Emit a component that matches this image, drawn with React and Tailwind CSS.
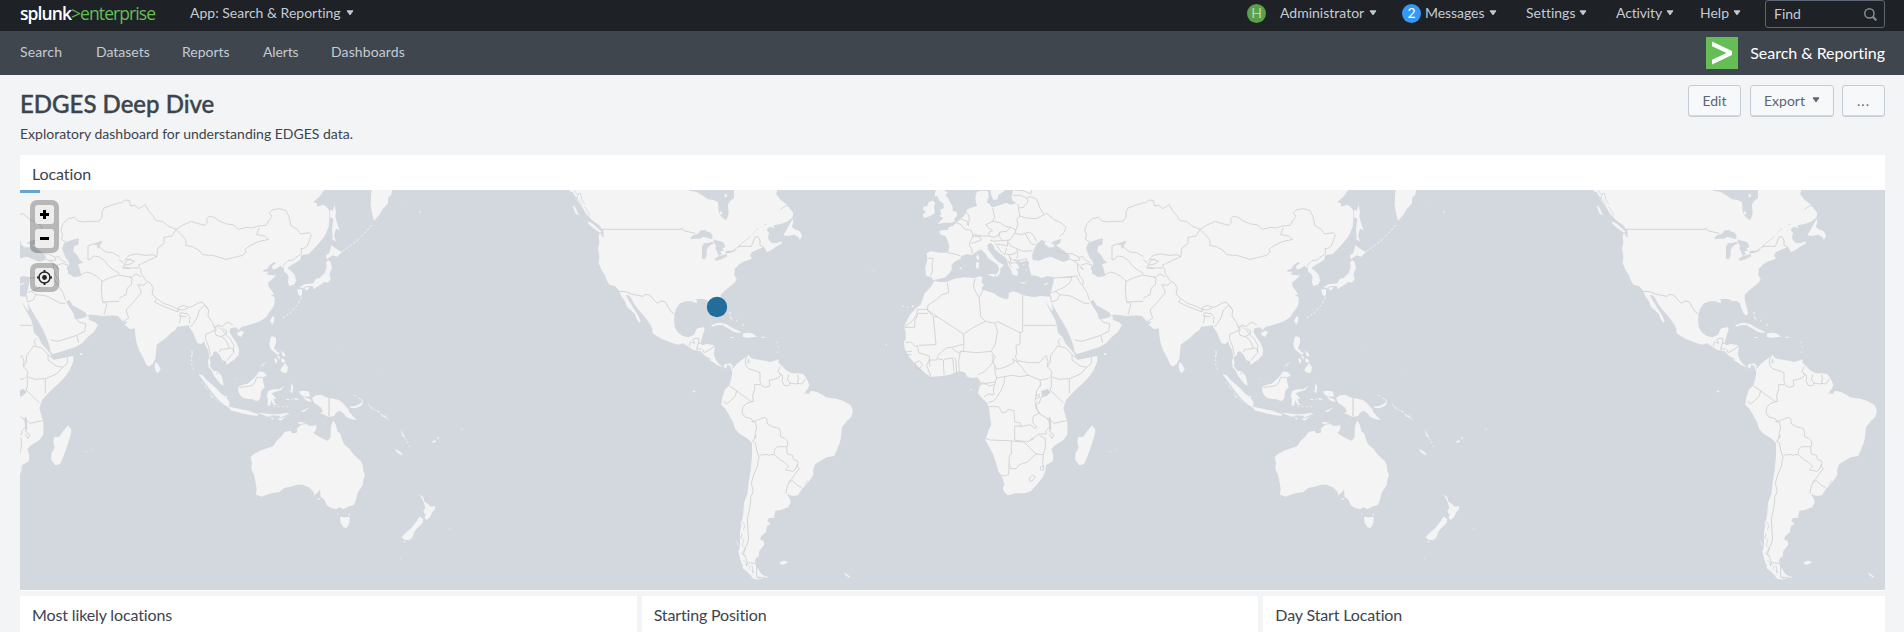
const LAND = '#f4f4f4';
const SEA = '#d3d8df';

function Caret({ className = '' }) {
  return (
    <svg viewBox="0 0 8 6" className={`h-[6px] w-[8px] shrink-0 ${className}`}>
      <path d="M1 0.8H7L4 4.9Z" fill="currentColor" stroke="currentColor" strokeWidth="0.9" strokeLinejoin="round" />
    </svg>
  );
}

/* Canada, the United States, Central America and the Caribbean */
function NorthAmerica() {
  return (
    <g transform="translate(540 180) scale(0.333333)">
      <path
        fill={LAND}
        d="M84 20L88 34L98 36L106 52L116 68L128 84L136 98L148 112L160 124L178 136L190 152L191 170L186 172L184 160L176 164L178 188L174 206L178 226L176 250L186 272L194 284L200 300L208 314L224 318L236 330L244 348L254 362L262 382L274 392L284 402L290 416L298 428L302 424L294 406L284 390L274 374L264 358L257 346L266 346L272 352L284 374L298 392L314 410L330 432L337 446L338 460L360 474L388 486L414 494L430 490L446 500L460 510L482 514L496 528L508 540L522 548L532 556L548 560L558 566L562 554L574 558L576 566L580 558L570 550L558 552L546 558L534 550L526 536L522 524L524 500L518 494L500 492L486 496L482 488L488 466L494 448L490 441L470 446L462 464L446 472L428 468L412 456L404 440L402 420L404 402L408 386L420 370L438 364L456 364L470 370L472 362L466 358L480 356L494 358L506 364L516 362L528 370L532 384L538 398L546 407L552 402L550 388L546 374L542 360L542 344L556 330L572 318L584 308L590 296L582 284L588 270L594 256L608 246L618 242L636 236L630 226L636 216L650 210L664 204L672 200L676 208L680 216L694 210L708 200L724 192L726 184L712 188L696 190L686 180L684 168L688 160L680 150L688 140L704 144L700 136L684 132L664 138L648 152L632 166L652 146L676 132L700 136L722 132L744 124L758 112L760 98L748 84L736 70L722 60L708 42L712 34L706 20L582 20L582 54L568 66L564 74L566 100L560 120L552 118L540 104L536 92L534 66L520 60L504 58L486 46L470 36L448 32L446 20Z"
      />
      <path fill={LAND} d="M758 116L748 134L738 152L730 166L744 168L762 164L774 170L780 180L786 168L780 154L764 148L756 140L760 126ZM142 124L156 130L172 144L186 156L180 158L162 146L146 132ZM98 76L108 84L112 96L118 106L108 102L102 90ZM554 42L562 44L560 52L554 50ZM540 94L546 96L546 104L540 102Z" />
      <path fill={LAND} d="M514 436L528 430L542 428L558 432L574 442L590 450L604 456L598 459L582 456L566 446L548 436L532 436L516 440ZM610 460L622 458L636 460L652 470L636 472L624 474L608 470ZM568 471L584 472L576 475ZM664 470L676 470L675 473L664 473ZM566 396L574 398L570 402ZM568 408L574 412L578 420L572 416ZM588 418L592 424L588 424ZM606 430L612 436L608 438ZM710 482L714 488L711 489ZM714 498L717 504L714 505ZM712 512L716 518L713 519ZM710 538L718 540L714 545L710 544ZM458 631L466 633L466 637L459 637ZM992 271L1002 272L1001 274Z" />
      <path fill={SEA} d="M450 178L458 166L474 162L480 152L494 149L500 154L512 158L518 168L516 178L502 174L490 170L480 176L466 176ZM486 200L492 190L508 188L522 184L534 182L550 186L556 200L546 206L552 212L540 214L546 222L536 228L532 218L526 204L516 192L506 200L500 210L500 228L494 238L486 236ZM524 238L532 230L546 226L562 222L560 230L544 238L528 243ZM554 220L560 212L576 212L592 202L584 214L568 220ZM584 264L592 260L590 278L584 282ZM712 158L724 160L736 150L744 138L734 156L728 172L722 180L708 176L700 164L696 178L688 172L690 156Z" />
      <path fill={LAND} d="M520 186L528 196L524 210L516 200Z" />
      <path fill="none" stroke={SEA} strokeWidth="2.5" d="M102 30L112 44L122 40L126 60L134 72M96 44L112 54L124 74L122 86M116 40L108 62L118 70M134 80L144 96L150 106M590 204L632 168M176 160L190 158" />
      <path fill="none" stroke="#cbcbcb" strokeWidth="2.4" strokeLinejoin="round" d="M186 148H424L426 144L432 152L448 156L466 160M520 180L534 184M592 202L600 199H634L642 180L646 170L654 170L660 180V196L670 200M238 334L256 335L274 342L308 349L318 343L330 346L342 360L352 370L364 362L376 366L386 384L394 396L404 402M448 498L450 486L464 490L458 478L466 475H476V490H482M474 490L470 508L484 506M486 508L494 518L510 508L522 500M500 532L512 538M546 554L552 562M722 88L740 76" />
    </g>
  );
}

function SouthAmerica() {
  return (
    <g transform="translate(690 340) scale(0.333333)">
      <path
        fill={LAND}
        d="M118 74L128 88L140 72L158 58L172 48L178 46L182 54L196 58L210 60L226 62L240 66L252 62L264 60L266 68L278 80L290 92L306 100L322 100L340 102L350 116L358 134L354 146L344 160L356 162L364 152L380 156L400 166L408 172L440 176L462 184L482 196L489 212L484 230L468 246L456 262L453 290L450 306L440 332L432 348L410 352L392 362L376 372L370 386L370 404L360 420L346 436L332 452L324 466L308 468L290 462L300 476L302 488L294 502L272 510L256 512L254 524L250 534L236 534L232 544L240 548L230 560L228 576L214 588L210 598L222 604L222 616L208 632L206 648L196 658L196 674L206 690L216 704L236 712L214 716L196 712L178 702L164 688L154 668L146 640L150 608L150 580L154 552L160 520L162 490L172 462L176 430L182 390L186 350L186 308L170 294L150 282L136 268L130 248L118 226L106 206L94 194L96 176L104 150L118 136L124 116L127 96Z"
      />
      <path fill={LAND} d="M140 600L144 612L142 618ZM144 630L152 642L148 646ZM152 656L164 664L158 670ZM156 678L168 682L172 694L160 688ZM180 704L200 712L210 720L190 716ZM268 668L278 662L292 664L290 670L276 675ZM462 698L470 702L480 710L478 713L466 705ZM232 548L242 552L236 556ZM152 540L156 546L154 560Z" />
      <path fill={SEA} d="M174 54L178 60L178 70L172 68ZM192 284L200 292L194 296ZM154 580L158 584L152 600ZM166 668L174 672L168 680ZM184 690L190 692L188 700Z" />
      <path fill="none" stroke={SEA} strokeWidth="2.5" d="M150 590L162 600L156 616L166 626L154 640L168 648M160 660L180 680L176 690M186 676L190 700M156 545L166 556L160 570M346 432L352 422M344 162L352 150L364 150" />
      <path
        fill="none"
        stroke="#cdcdcd"
        strokeWidth="2.4"
        strokeLinejoin="round"
        d="M170 48L166 62L168 78L176 86L190 90L210 98L210 124L214 136L226 142L240 138L238 120L250 118L264 114L272 106L264 94L270 80M268 98L278 108L276 122L282 136L294 138L300 130L292 118L296 104M300 130L322 132L326 116L322 104M322 130L336 132L346 116M210 134L194 134V148L188 166L190 184L180 184L170 174L154 164L140 152L118 138M140 152L136 168L124 180L110 192L100 184M190 184L170 190L158 202L156 218L166 232L184 236L188 244L196 242L224 232L230 236L232 252L248 260L268 266L272 280L272 290L286 296L294 306L292 320M184 244L196 246L200 262L196 280L198 290L190 300L188 306M190 304L196 308L200 330L206 350L214 344H234L236 348L240 344H252M252 344L254 328L264 320L290 320L292 342L308 346L310 358L324 364L322 380L328 386L322 392L310 410L300 422L296 432M252 344L272 360L288 370L296 380L286 390L308 394L316 388L322 374M296 424L308 422L320 434L334 442L338 446M296 428L290 446L288 460M206 352L202 380L192 402L184 430L190 456L182 470L182 486L178 512L172 536L174 570L176 600L168 620L160 642L168 654L172 668L196 670M200 676V712L226 712"
      />
    </g>
  );
}

/* Europe, the Middle East and Africa */
function EuropeAfrica() {
  return (
    <g transform="translate(880 180) scale(0.333333)">
      <path
        fill={LAND}
        d="M400 20L398 38L394 50L398 62L410 70L392 74L378 68L352 78L336 82L326 70L318 66L326 52L324 34L306 32L290 36L286 52L288 68L292 78L278 82L262 88L258 98L248 112L240 120L228 128L218 138L206 142L204 150L188 150L178 154L182 164L196 168L204 184L208 200L204 218L180 218L152 214L140 220L142 240L136 262L138 288L152 290L160 300L172 298L196 292L208 280L216 268L214 256L226 244L242 236L244 228L262 222L276 226L288 216L302 208L316 220L324 234L338 244L352 254L358 268L352 280L344 288L352 290L362 276L360 266L372 256L356 246L344 234L334 222L324 208L322 194L332 188L340 196L344 208L358 220L374 230L382 242L384 256L392 268L398 284L412 288L414 276L408 266L420 264L412 252L404 248L412 242L424 246L438 242L448 246L446 258L450 272L454 286L470 288L486 294L502 288L522 292L520 308L516 324L512 344L510 362L518 376L528 392L538 410L548 426L560 448L572 474L580 496L584 516L592 522L630 510L660 500L680 488L696 470L714 456L726 434L716 426L700 420L696 404L688 412L672 416L656 416L652 400L640 382L630 364L640 360L650 376L672 388L692 400L702 394L712 404L790 406V20Z"
      />
      <path
        fill={LAND}
        d="M164 302L176 306L200 306L224 296L252 292L282 294L302 288L308 294L304 306L312 314L304 326L318 332L342 340L356 350L378 358L386 354L386 340L400 334L414 338L430 346L462 352L480 348L510 350L512 364L518 384L520 392L512 388L496 362L506 384L516 402L526 420L530 436L534 458L548 472L556 490L572 508L586 524L584 532L594 540L620 534L652 527L652 544L640 572L624 594L604 614L580 636L558 660L550 684L556 706L562 726L562 764L550 780L522 798L514 808L520 826L518 844L498 856L496 874L488 892L470 914L452 934L434 940L406 940L384 946L374 938L368 924L374 914L366 890L356 876L348 848L340 824L328 802L316 780L324 756L334 732L330 710L328 690L322 670L308 656L294 640L298 622L300 604L292 592L276 594L262 590L256 578L242 574L226 576L210 584L186 588L152 590L138 582L122 566L104 550L90 534L80 520L74 504L72 488L78 474L76 452L72 440L80 424L90 404L106 386L122 374L128 358L134 340L152 322Z"
      />
      <path fill={LAND} d="M176 20L166 34L164 50L172 48L178 62L190 70L192 84L180 90L184 102L178 108L190 114L182 122L172 132L192 128L212 128L226 124L222 118L232 106L230 96L218 92L218 80L210 66L204 54L196 46L204 36L194 34L196 20ZM146 66L158 62L166 68L162 80L164 100L150 108L132 114L128 104L138 96L130 90L130 80L142 78ZM324 60L316 52L306 62L316 70ZM330 20L334 46L340 60L352 58L356 44L372 34L376 20ZM288 230L294 222L298 236L294 242ZM288 246L298 248L296 266L288 264ZM322 282L346 282L342 292ZM236 264L246 262L244 268ZM418 306L442 308L430 311ZM490 314L506 306L500 314ZM622 752L636 736L646 748L644 764L634 796L622 830L612 852L598 856L586 840L586 820L596 804L592 786L594 772L610 770ZM672 520L682 522L674 526ZM64 376L72 378L68 382ZM80 380L87 382L82 385ZM94 379L103 375L98 383ZM688 812L694 814L690 817ZM706 806L710 808L706 811ZM16 494L22 492L18 498ZM272 626L276 630L270 630ZM254 256L258 258L254 260Z" />
      <path
        fill={SEA}
        d="M458 240L456 226L462 208L470 192L484 180L496 184L494 192L506 202L520 202L524 194L512 190L524 182L544 176L540 190L528 196L546 208L568 226L570 238L552 246L530 238L514 230L496 234L478 242ZM618 206L624 190L640 182L668 174L668 192L654 200L652 214L664 226L672 240L682 248L666 252L672 270L676 288L654 292L636 280L636 264L640 248L628 232ZM732 184L740 182L732 196L726 208L722 194L712 196L720 188ZM484 634L502 626L512 636L500 648L486 652ZM464 660L470 672L474 690L482 700L476 702L466 684ZM506 710L512 714L514 748L508 752L508 730ZM462 770L448 780L456 780ZM480 612L484 618L476 622ZM416 250L424 246L428 262L440 258L444 272L448 288L436 290L424 282L418 272Z"
      />
      <path fill={LAND} d="M396 246L412 254L416 268L406 264ZM428 252L434 254L430 257ZM436 268L442 270L438 272Z" />
      <path
        fill="none"
        stroke="#cdcdcd"
        strokeWidth="2.4"
        strokeLinejoin="round"
        d="M204 218L224 222L242 228M142 234L160 236L156 252L158 272L152 286M228 128L244 134L252 146L274 152L280 166L272 182L268 196L276 208L276 222M244 118L262 124L266 138M258 98L266 104L268 120L262 136M276 168L300 170L304 180L288 186L274 190M282 164L310 168L326 168L328 156L338 152L326 144L318 134L338 124L344 112L338 84M338 124L360 128L374 138L392 142M326 168L340 172L356 166L360 156L380 154L392 142L408 150L414 132L410 118L420 108L416 88L414 72M360 156L356 168L368 182L390 180L404 160L408 150M330 180L342 184L356 182L368 182M344 192L362 194L382 198L384 180M350 196L364 216L374 224L380 204M384 186L392 198L410 206L412 214L402 222L390 224L378 222M404 160L424 164L436 160L444 176L456 194L466 192M410 206L430 214L458 212M414 214L412 232L402 242L392 236L386 224M402 242L426 240L440 236L440 246M436 160L450 156L462 168L470 184M390 232L392 250L404 248M384 242L394 262M418 108L440 114L470 116L492 104L480 84L470 58L452 50L440 54L444 66L430 82L416 84M398 46L420 46L440 54M402 30L430 32L452 42L456 28M492 104L500 100L524 120L546 130L558 142L552 158L538 170M524 212L556 220L578 222L598 232L608 230L616 240L632 248M570 238L582 242L592 250L610 268L602 264M582 242L600 240L596 232M592 250L594 272L600 290L610 300L608 318L622 340L628 360M522 294L550 292L590 288M550 292L576 292L570 308L552 322L526 334L516 338M526 334L540 344L572 348L614 370H628M540 344L532 360L514 366L512 348M590 288L598 304L604 314M584 480L606 484L632 476L662 466L686 454L690 432L668 426L662 416M662 466L668 488M540 496L534 484L542 474M634 270L636 256L620 250L602 256M614 150L622 130L636 116L656 112L664 122L680 126L700 124L728 124L738 112L738 96L744 84L790 68M614 150L620 164L616 178L630 186M696 240V198L716 190M696 240L706 236L712 228L728 230L748 244L756 256L770 268L790 280M676 284L690 276L706 280L724 290L738 304L736 330L740 366L752 370L750 384L744 404M740 366L790 364M728 200L750 216L770 218L790 230M738 304L760 294L790 284"
      />
      <path
        fill="none"
        stroke="#cdcdcd"
        strokeWidth="2.4"
        strokeLinejoin="round"
        d="M202 308L206 338L186 344L170 358L144 376L142 390L250 462L278 444L316 424L302 410L298 352L292 344L284 330L280 316L286 296M144 388H112L110 404L96 424L72 442M74 442H104L104 424L114 400H144M116 496L168 494L160 410H172M142 390L160 410M298 352L306 336L310 326M316 424L346 430L352 424L420 458L428 454V346M430 436H530M420 458L420 492L408 496L410 520L406 530L414 548L398 536L402 548L374 562L350 568L344 556L336 542L346 532L334 514L346 492L352 456L346 430M250 462L252 492L216 502L198 504L174 526L170 540L148 540M252 492L250 514L286 518L314 516L334 514M216 502L224 512L240 520L236 544L238 574M174 536L190 540L192 584M192 538L218 534L222 574M224 532L228 544L230 576M78 488L92 486L106 500L112 496L116 518L148 528L148 540L140 556L152 588M76 516L96 514M76 524L94 524M106 548L118 542L128 554L118 566L106 564ZM148 540L150 560M242 520L240 514L250 514M336 524L342 542L328 560L314 574L294 584M344 556L346 582L350 594L346 606L318 610L298 608M318 612H300V620M346 606L340 628L342 644L326 642L312 650M318 612L328 618L342 614M350 594L374 590L372 610L364 630L352 650L342 662L326 668M374 590L396 586L420 590L446 586L480 600L504 596L514 586M414 548L446 588M414 542L444 548L478 548L498 526L504 544L502 560L516 574L514 586M502 560L510 548L512 526L526 508L532 498L558 504L576 524L584 530M576 524V540L600 558L620 562M620 562L634 550V532M620 562L602 582L568 596M514 590L536 598L568 596V640M514 592L514 620L510 630L550 668M510 636H486M480 600L482 616L470 632L468 650L464 662M466 646L478 644V652L468 656M470 664L476 672L486 648M324 680H356L366 698L378 696L384 688L402 692L404 726L420 728L424 740L450 734L466 746L470 740L458 728L460 708L476 700L500 714L508 726L510 740L498 752V762L476 762L460 776L448 784L430 784L404 780V738H424M318 776L330 780L384 782L430 786M394 784V822L388 826L386 884L372 888L362 884M430 784L448 802L468 822L490 824L496 802L496 776L478 766M468 822L442 846L418 854L408 866L392 866L388 850M490 824L488 850L492 862M480 862L488 858L492 868L484 872ZM448 894L458 886L466 890L458 902L450 904ZM502 714L522 730L560 722M510 740L510 756L522 764L516 776L508 762"
      />
    </g>
  );
}

/* Asia east of the Caspian, Japan and the Malay archipelago */
function Asia() {
  return (
    <g transform="translate(1080 180) scale(0.333333)">
      <path
        fill={LAND}
        d="M90 20H810L802 34L790 50L772 66L782 70L784 80L800 74L812 80L820 92L820 118L818 140L806 168L790 188L772 208L758 222L744 224L736 226L732 240L718 248L706 256L694 264L706 274L716 284L720 300L716 312L700 318L696 306L698 292L692 280L684 276V264L672 258L660 266L650 268L648 258L660 250L654 246L640 256L634 266L620 270L624 276L636 274L634 284L650 286L660 286L650 296L636 308L638 320L648 332L654 344L644 344L656 352L656 368L650 384L638 400L630 412L612 424L596 430L576 436L558 440L548 450L540 442L524 444L520 456L530 472L542 490L549 508L548 524L536 538L520 548L512 556L510 544L498 540L492 526L480 514L472 516L470 526L460 532L464 548L462 558L472 572L484 574L496 586L500 600L503 616L496 614L484 600L474 588L468 574L458 562L456 544L460 528L456 510L448 496L444 484L436 492L424 490L418 474L412 460L402 444L398 436L384 438L364 440L358 450L344 460L334 470L316 484L302 494L300 516L298 536L290 552L278 560L270 552L262 534L250 512L242 490L238 466L236 444L222 448L206 434L214 426L200 424L186 408L170 406L140 408L110 404L90 404Z"
      />
      <path fill={LAND} d="M298 546L306 552L314 568L308 578L300 576L296 560ZM544 458L556 452L564 456L556 470L544 466ZM650 408L656 414L650 434L642 424ZM836 76L840 96L838 112L850 150L840 146L834 168L840 184L830 180L828 150L832 116L822 112L822 90L830 92ZM826 196L840 206L858 216L844 230L830 226L820 232L812 238L810 226L820 220ZM816 240L824 246L828 264L820 282L824 298L816 308L804 306L794 314L782 320L774 328L770 318L754 318L740 324L730 322L748 312L772 310L780 296L790 294L806 280L812 262L810 248ZM724 328L738 328L738 344L732 350L726 340ZM746 324L760 320L758 328L748 330ZM946 36L952 20L1010 20L1006 44L996 54L996 70L980 88L970 104L954 122L948 100L944 72ZM932 152L938 148L944 142ZM1030 60L1044 66L1038 64ZM1090 94L1096 98L1090 99ZM714 318L716 320L712 321Z" />
      <path fill="none" stroke={LAND} strokeWidth="3" strokeDasharray="7 6" d="M860 214L910 176M916 170L950 132M736 352L726 372L704 398L680 414" />
      <path fill={LAND} d="M644 472L650 468L660 474L660 488L654 504L664 516L672 520L664 524L650 512L644 508L640 492ZM662 526L672 530L670 540ZM676 512L686 520L688 530L680 528ZM676 534L688 540L686 548L676 546ZM656 532L664 540L662 552L656 546ZM674 566L688 550L696 562L692 580L682 578L674 574ZM638 532L630 544L612 560L622 556ZM546 620L560 614L574 612L590 598L602 586L610 574L622 576L632 586L620 594L622 610L626 622L616 632L612 656L604 664L590 658L572 656L558 652L548 638ZM428 582L440 586L452 600L466 612L480 624L494 640L510 652L520 666L520 682L506 676L490 662L474 644L460 626L444 604L434 592ZM518 682L536 684L552 690L570 690L592 698L606 702L604 708L580 704L556 700L530 692ZM636 634L650 628L670 628L684 618L676 630L656 636L646 640L656 650L662 656L652 656L658 672L666 676L652 674L646 660L642 678L634 676L636 658L632 648ZM706 610L712 620L708 642L704 630ZM730 636L744 632L760 636L758 648L744 650L734 644ZM690 656L702 660L692 660ZM712 654L732 658L720 660ZM612 700L640 704L650 708L634 710ZM676 700L690 704L670 714ZM658 702L680 702L690 698L700 700L680 706ZM72 520L78 521L72 524ZM408 512L410 520L406 540ZM508 646L516 650L510 652ZM446 618L452 626L448 624ZM460 642L474 656L464 650ZM538 594L542 597L538 598Z" />
      <path fill="none" stroke={LAND} strokeWidth="2.5" strokeDasharray="5 8" d="M408 512L406 550L416 574M438 606L470 648L490 668M652 680H700" />
      <path
        fill="none"
        stroke="#cdcdcd"
        strokeWidth="2.4"
        strokeLinejoin="round"
        d="M136 82L176 72L196 68L208 60L220 62L224 78L236 76L248 86L268 74L276 90L290 106L300 122L320 124L336 138L360 148L384 134L406 124L424 130L446 136L454 128L452 118L460 108L474 112L488 122L512 132L530 134L548 148L570 142L590 144L606 138L630 136L640 120L648 110L640 98L648 90L670 86L690 92L700 112L704 136L724 148L734 162L760 158L766 166L754 198L742 206L736 204L736 222L720 232L712 240L696 242L680 258M360 148L376 164L390 180V196L410 200L430 212L440 224L470 226L490 232L510 238L536 232L560 226L570 216L568 208L580 198L604 186L638 178L626 168L602 164L610 142M360 148L348 168L324 172V190L306 204L302 230L290 224L270 226L240 222L220 226L206 240L220 238L236 244L224 252L204 256L212 244L224 236M128 198L140 210L160 218L178 220L186 236L204 250M302 230L280 240L260 250L246 256L254 268L256 280L270 302L282 308L292 324L288 342L300 354L322 370L346 378L366 388L384 390L398 382L408 380L424 370L438 366L448 376L458 390L456 408L470 428L478 444L486 434L498 440L514 426L530 434M204 262L220 264L246 264M204 256L200 264L222 266M184 284L202 288L226 292L240 282L256 290M100 234L108 228L124 232L140 240L152 256L168 262L190 282M134 300L152 300L168 286L190 286M138 308L134 340L138 366L180 364L190 354L210 344L214 324L226 314L228 298L222 288M138 366L152 374L154 388L144 404M272 308L262 316L246 314L252 326L256 338L236 362L216 384L210 390L218 414L204 424M300 358L296 366L320 378L346 388L366 396L368 382L382 376L398 382M370 400L374 412L370 430M372 398L396 402L402 412L400 430M370 408L392 410M458 390L446 376L430 390L424 412L412 430L404 440M470 436L482 448L466 456L450 462L448 476L458 500L462 524M476 446L480 466L496 470L510 480L520 504L530 506L534 516L524 528L512 542M496 470L510 462L512 452L500 446M490 516L494 508L520 506M480 578L486 582M550 622L572 620L590 616L598 604L602 592L620 592M484 438L500 452L512 466L524 478L534 498L532 516"
      />
    </g>
  );
}

/* New Guinea, Australia, New Zealand and the nearby islands */
function Oceania() {
  return (
    <g transform="translate(1180 340) scale(0.333333)">
      <path
        fill={LAND}
        d="M532 242L540 256L544 274L554 282L558 300L566 314L580 326L592 342L604 354L614 362L620 374L622 392L627 404L622 420L620 436L606 456L600 478L594 494L576 500L562 508L550 502L540 508L526 504L512 496L506 480L494 470L492 448L484 462L476 466L470 452L458 442L440 434L424 434L402 440L384 444L370 456L346 460L332 464L318 470L300 464L302 446L298 424L294 404L286 386L288 370L284 352L294 342L312 332L336 324L352 318L362 302L374 292L386 276L404 272L408 280L422 278L424 264L436 254L450 252L462 258L482 256L480 270L472 280L486 288L504 298L516 302L524 290L524 268L528 250Z"
      />
      <path fill={LAND} d="M552 530L566 532L581 530L580 548L572 564L562 562L554 548ZM544 518L548 524L544 524ZM578 520L582 524L578 528ZM484 474L494 476L486 480ZM792 464L802 472L806 486L816 492L824 500L838 498L836 508L828 518L822 532L812 540L806 534L808 524L802 514L808 504L804 490ZM790 530L802 536L800 548L788 560L776 574L768 594L758 601L742 598L738 590L750 578L766 564L780 546ZM744 602L750 604L746 608ZM468 174L480 166L496 164L510 172L532 176L548 180L560 188L568 198L576 206L580 216L592 230L604 240L588 238L572 232L562 220L550 212L540 218L534 228L516 230L500 222L492 220L500 216L496 204L486 196L474 188ZM428 154L442 152L458 156L462 168L452 170L446 162ZM440 170L462 178L468 186L452 182ZM580 200L598 198L610 192L622 184L618 196L600 204L584 204ZM604 172L616 178L624 186ZM716 326L730 334L742 344L734 344L722 336ZM736 276L744 284L746 294L740 290ZM748 296L750 302ZM828 304L838 300L840 306L830 308ZM842 294L852 290L846 298ZM914 264L924 270L916 268ZM424 248L436 246L450 250L430 252ZM878 566L884 566L882 569ZM732 652L735 655L732 656ZM636 194L650 206L656 212L644 204ZM660 210L674 216L668 216ZM674 222L688 230L680 230ZM686 222L694 236L688 232ZM304 218L344 222L380 224L404 222L380 228L320 224ZM364 238L388 230L400 222L374 242ZM344 232L356 236L348 238ZM216 200L250 206L270 212L292 218L288 222L250 216L226 212ZM434 214L460 202L444 216Z" />
      <path fill={SEA} d="M478 464L490 452L486 474ZM806 476L810 484L804 480Z" />
      <path d="M519 174V228" stroke="#dedede" strokeWidth="5" fill="none" />
      <path fill="none" stroke={LAND} strokeWidth="2.5" strokeDasharray="5 7" d="M636 192L700 242M736 274L762 320M394 178L430 180M596 166L622 184M400 152L410 158L406 134" />
      <path fill={LAND} d="M550 34L553 36L550 37ZM668 91L670 93L667 94Z" />
    </g>
  );
}

function WorldMap() {
  return (
    <svg viewBox="20 190 1865 400" className="block h-[400px] w-full" preserveAspectRatio="none">
      <defs>
        <g id="world">
          <SouthAmerica />
          <NorthAmerica />
          <Asia />
          <EuropeAfrica />
          <Oceania />
        </g>
      </defs>
      <rect x="20" y="190" width="1865" height="400" fill={SEA} />
      <use href="#world" x="-1024" />
      <use href="#world" />
      <use href="#world" x="1024" />
      <circle cx="717" cy="307" r="10.2" fill="#236d9c" />
    </svg>
  );
}

function MapButton({ children }) {
  return (
    <button className="flex h-[19px] w-[19px] items-center justify-center rounded-[3px] bg-[#f4f4f4]/90">
      {children}
    </button>
  );
}

function MapControls() {
  return (
    <div className="absolute left-[10px] top-[10px] flex flex-col gap-[10px]">
      <div className="flex flex-col gap-[5px] rounded-[7px] bg-black/25 p-[5px]">
        <MapButton>
          <svg viewBox="0 0 9 9" className="h-[9px] w-[9px]">
            <path d="M3 0H6V3H9V6H6V9H3V6H0V3H3Z" fill="#000" />
          </svg>
        </MapButton>
        <MapButton>
          <svg viewBox="0 0 9 3" className="h-[3px] w-[9px]">
            <path d="M0 0H9V3H0Z" fill="#000" />
          </svg>
        </MapButton>
      </div>
      <div className="rounded-[7px] bg-black/25 p-[5px]">
        <MapButton>
          <svg viewBox="0 0 15 15" className="h-[15px] w-[15px]">
            <circle cx="7.5" cy="7.5" r="5.5" fill="none" stroke="#222" strokeWidth="1.4" />
            <circle cx="7.5" cy="7.5" r="2.4" fill="#222" />
            <path d="M7.5 0V2.5M7.5 12.5V15M0 7.5H2.5M12.5 7.5H15" stroke="#222" strokeWidth="1.8" />
          </svg>
        </MapButton>
      </div>
    </div>
  );
}

function TopBar() {
  return (
    <header className="flex h-[31px] items-start bg-[#1e2126] text-[14px] leading-[26px] text-[#c3cbd4]">
      <div className="flex w-[170px] items-center pl-[20px] font-['Open_Sans',sans-serif] text-[17.5px] leading-[26px] tracking-[-0.92px]">
        <span className="font-semibold text-white">splunk</span>
        <span className="text-[#65bd56]">&gt;enterprise</span>
      </div>
      <div className="flex items-center pl-[20px]">
        <span>App: Search &amp; Reporting</span>
        <Caret className="ml-[5px]" />
      </div>
      <div className="ml-auto flex items-start pr-[19px]">
        <div className="flex h-[26px] w-[155px] items-center">
          <span className="flex h-[19px] w-[19px] items-center justify-center rounded-full bg-[#5ba049] text-[14px] leading-none text-[#b9d6b4]">H</span>
          <span className="ml-[14px]">Administrator</span>
          <Caret className="ml-[5px]" />
        </div>
        <div className="flex h-[26px] w-[124px] items-center">
          <span className="flex h-[19px] w-[19px] items-center justify-center rounded-full bg-[#3399f5] text-[14px] leading-none text-white">2</span>
          <span className="ml-[4px] tracking-[-0.05px]">Messages</span>
          <Caret className="ml-[5px]" />
        </div>
        <div className="flex w-[90px] items-center">
          <span>Settings</span>
          <Caret className="ml-[4px]" />
        </div>
        <div className="flex w-[84px] items-center">
          <span className="tracking-[-0.15px]">Activity</span>
          <Caret className="ml-[4px]" />
        </div>
        <div className="flex w-[65px] items-center">
          <span>Help</span>
          <Caret className="ml-[4px]" />
        </div>
        <div className="flex h-[28px] w-[120px] items-center justify-between rounded-[3px] border border-[#5c6773] pl-[8px] pr-[7px]">
          <span>Find</span>
          <svg viewBox="0 0 13 13" className="h-[13px] w-[13px]" fill="none" stroke="#818d99">
            <circle cx="5.4" cy="5.4" r="4.6" strokeWidth="1.5" />
            <path d="M8.8 8.8L12.3 12.3" strokeWidth="2.2" />
          </svg>
        </div>
      </div>
    </header>
  );
}

function AppNav() {
  return (
    <nav className="flex h-[44px] items-center bg-[#40464e] pl-[20px] pr-[19px] text-[14px] text-[#c3cbd4]">
      <div className="flex pb-[2px] leading-[20px]">
        <span className="w-[76px] tracking-[0.15px]">Search</span>
        <span className="w-[86px]">Datasets</span>
        <span className="w-[81px]">Reports</span>
        <span className="w-[68px] tracking-[-0.15px]">Alerts</span>
        <span className="tracking-[0.12px]">Dashboards</span>
      </div>
      <div className="ml-auto flex items-center text-[16px] text-white">
        <span className="flex h-[32px] w-[32px] items-center justify-center bg-[#65bd56]">
          <svg viewBox="0 0 32 32" className="h-[32px] w-[32px]">
            <path d="M6 4.5L26 14V18L6 27.5V22.8L20.5 16L6 9.2Z" fill="#fff" />
          </svg>
        </span>
        <span className="ml-[12px] tracking-[-0.03px]">Search &amp; Reporting</span>
      </div>
    </nav>
  );
}

function ActionButton({ className, children }) {
  return (
    <button
      className={`flex h-[32px] items-center justify-center rounded-[3px] border border-[#c3cbd4] bg-[#f7f8fa] pb-[2px] text-[14px] text-[#5c6773] shadow-[inset_0_-1px_0_#d5dae0] ${className}`}
    >
      {children}
    </button>
  );
}

function PanelTitle({ className, children }) {
  return <h2 className={`bg-white pl-[12px] pt-[8px] text-[16px] leading-[22px] ${className}`}>{children}</h2>;
}

export default function App() {
  return (
    <div className="flex h-[632px] w-[1904px] flex-col overflow-hidden bg-[#f2f4f5] font-['Lato','Open_Sans',sans-serif] text-[#3c444d] [font-variant-ligatures:none]">
      <TopBar />
      <AppNav />
      <div className="flex h-[80px] shrink-0 justify-between pl-[20px] pr-[19px] pt-[10px]">
        <div>
          <h1 className="mt-[4px] text-[24px] font-medium leading-[30px] [-webkit-text-stroke:0.4px_#3c444d]">EDGES Deep Dive</h1>
          <p className="mt-[5px] text-[14px] leading-[20px]">Exploratory dashboard for understanding EDGES data.</p>
        </div>
        <div className="flex items-start">
          <ActionButton className="w-[53px]">Edit</ActionButton>
          <ActionButton className="ml-[9px] w-[84px]">
            Export
            <Caret className="ml-[7px]" />
          </ActionButton>
          <ActionButton className="ml-[8px] w-[43px] tracking-[1px]">...</ActionButton>
        </div>
      </div>
      <section className="ml-[20px] mr-[19px] h-[436px] shrink-0 bg-white">
        <PanelTitle className="h-[35px] tracking-[-0.1px]">Location</PanelTitle>
        <div className="relative">
          <WorldMap />
          <div className="absolute left-0 top-0 h-[3px] w-[20px] bg-[#65a3d3]" />
          <MapControls />
        </div>
      </section>
      <div className="ml-[20px] mr-[19px] mt-[5px] flex h-[36px] shrink-0">
        <PanelTitle className="mr-[5px] w-[616.67px] tracking-[-0.13px]">Most likely locations</PanelTitle>
        <PanelTitle className="mr-[5px] w-[616.67px] tracking-[-0.15px]">Starting Position</PanelTitle>
        <PanelTitle className="flex-1 tracking-[-0.13px]">Day Start Location</PanelTitle>
      </div>
    </div>
  );
}
